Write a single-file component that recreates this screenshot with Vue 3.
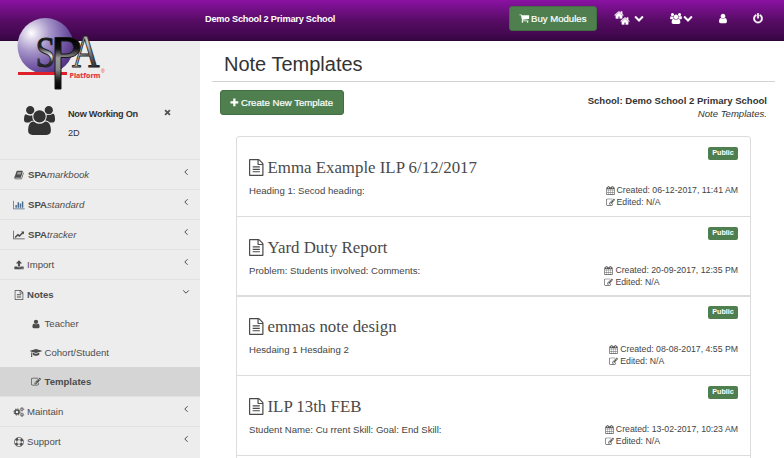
<script setup>
import { h } from 'vue'

const icons = {
  book: ['0 0 1792 1792', 'M1703 478q40 57 18 129l-275 906q-19 64-76.500 107.500t-122.500 43.500h-923q-77 0-148.500-53.500t-99.500-131.500q-24-67-2-127 0-4 3-27t4-37q1-8-3-21.500t-3-19.500q2-11 8-21t16.500-23.500 16.500-23.500q23-38 45-91.500t30-91.500q3-10 .5-30t-.5-28q3-11 17-28t17-23q21-36 42-92t25-90q1-9-2.500-32t.5-28q4-13 22-30.500t22-22.500q19-26 42.500-84.500t27.500-96.500q1-8-3-25.500t-2-26.500q2-8 9-18t18-23 17-21q8-12 16.500-30.500t15-35 16-36 19.500-32 26.500-23.500 36-11.500 47.500 5.500l-1 3q38-9 51-9h761q74 0 114 56t18 130l-274 906q-36 119-71.500 153.500t-128.500 34.500h-869q-27 0-38 15-11 16-1 43 24 70 144 70h923q29 0 56-15.500t35-41.500l300-987q7-22 5-57 38 15 59 43zm-1064 2q-4 13 2 22.500t20 9.500h608q13 0 25.500-9.500t16.500-22.500l21-64q4-13-2-22.500t-20-9.500h-608q-13 0-25.500 9.500t-16.500 22.500zm-83 256q-4 13 2 22.500t20 9.500h608q13 0 25.500-9.500t16.500-22.500l21-64q4-13-2-22.500t-20-9.500h-608q-13 0-25.500 9.500t-16.500 22.500z'],
  user: ['128 0 1536 1792', 'M1536 1399q0 109-62.500 187t-150.500 78h-854q-88 0-150.500-78t-62.500-187q0-85 8.500-160.500t31.500-152 58.500-131 94-89 134.500-34.500q131 128 313 128t313-128q76 0 134.500 34.500t94 89 58.500 131 31.500 152 8.500 160.500zm-256-887q0 159-112.500 271.500t-271.500 112.500-271.500-112.500-112.500-271.500 112.500-271.500 271.500-112.500 271.500 112.500 112.500 271.500z'],
  group: ['-64 0 1920 1792', 'M529 896q-162 5-265 128h-134q-82 0-138-40.500t-56-118.500q0-353 124-353 6 0 43.500 21t97.500 42.500 119 21.500q67 0 133-23-5 37-5 66 0 159 81 290zm1071 637q0 120-73 189.500t-194 69.500h-874q-121 0-194-69.500t-73-189.500q0-53 3.500-103.500t14-109 26.500-108.500 43-97.500 62-81 85.500-53.500 111.500-20q10 0 43 21.500t73 48 107 48 135 21.500 135-21.500 107-48 73-48 43-21.500q61 0 111.500 20t85.500 53.500 62 81 43 97.500 26.500 108.500 14 109 3.500 103.500zm-1024-1277q0 106-75 181t-181 75-181-75-75-181 75-181 181-75 181 75 75 181zm704 384q0 159-112.500 271.500t-271.500 112.500-271.500-112.500-112.500-271.500 112.500-271.500 271.500-112.500 271.500 112.500 112.500 271.500zm576 225q0 78-56 118.500t-138 40.500h-134q-103-123-265-128 81-131 81-290 0-29-5-66 66 23 133 23 59 0 119-21.500t97.500-42.500 43.500-21q124 0 124 353zm-128-609q0 106-75 181t-181 75-181-75-75-181 75-181 181-75 181 75 75 181z'],
  bar: ['0 0 2048 1792', 'M640 896v512h-256v-512h256zm384-512v1024h-256v-1024h256zm1024 1152v128h-2048v-1536h128v1408h1920zm-640-896v768h-256v-768h256zm384-384v1152h-256v-1152h256z'],
  line: ['0 0 2048 1792', 'M2048 1536v128h-2048v-1536h128v1408h1920zm-128-1248v435q0 21-19.500 29.500t-35.500-7.500l-121-121-633 633q-10 10-23 10t-23-10l-233-233-416 416-192-192 585-585q10-10 23-10t23 10l233 233 464-464-121-121q-16-16-7.500-35.500t29.500-19.500h435q14 0 23 9t9 23z'],
  upload: ['0 0 1792 1792', 'M1344 1472q0-26-19-45t-45-19-45 19-19 45 19 45 45 19 45-19 19-45zm256 0q0-26-19-45t-45-19-45 19-19 45 19 45 45 19 45-19 19-45zm128-224v320q0 40-28 68t-68 28h-1472q-40 0-68-28t-28-68v-320q0-40 28-68t68-28h427q21 56 70.500 92t110.500 36h256q61 0 110.500-36t70.500-92h427q40 0 68 28t28 68zm-325-648q-17 40-59 40h-256v448q0 26-19 45t-45 19h-256q-26 0-45-19t-19-45v-448h-256q-42 0-59-40-17-39 14-69l448-448q18-19 45-19t45 19l448 448q31 30 14 69z'],
  file: ['128 0 1536 1792', 'M1596 380q28 28 48 76t20 88v1152q0 40-28 68t-68 28h-1344q-40 0-68-28t-28-68v-1600q0-40 28-68t68-28h896q40 0 88 20t76 48zm-444-244v376h376q-10-29-22-41l-313-313q-12-12-41-22zm384 1528v-1024h-416q-40 0-68-28t-28-68v-416h-768v1536h1280zm-1024-864q0-14 9-23t23-9h704q14 0 23 9t9 23v64q0 14-9 23t-23 9h-704q-14 0-23-9t-9-23v-64zm736 224q14 0 23 9t9 23v64q0 14-9 23t-23 9h-704q-14 0-23-9t-9-23v-64q0-14 9-23t23-9h704zm0 256q14 0 23 9t9 23v64q0 14-9 23t-23 9h-704q-14 0-23-9t-9-23v-64q0-14 9-23t23-9h704z'],
  cap: ['0 0 2304 1792', 'M1774 836l18 316q4 69-82 128t-235 93.500-323 34.500-323-34.500-235-93.500-82-128l18-316 574 181q22 7 48 7t48-7zm530-324q0 23-22 31l-1120 352q-4 1-10 1t-10-1l-652-206q-43 34-71 111.500t-34 178.500q63 36 63 109 0 69-58 107l58 433q2 14-8 25-9 11-24 11h-192q-15 0-24-11-10-11-8-25l58-433q-58-38-58-107 0-73 65-111 11-207 98-330l-333-104q-22-8-22-31t22-31l1120-352q4-1 10-1t10 1l1120 352q22 8 22 31z'],
  edit: ['0 0 1792 1792', 'M888 1184l116-116-152-152-116 116v56h96v96h56zm440-720q-16-16-33 1l-350 350q-17 17-1 33t33-1l350-350q17-17 1-33zm80 594v190q0 119-84.500 203.500t-203.500 84.500h-832q-119 0-203.500-84.500t-84.500-203.500v-832q0-119 84.500-203.500t203.500-84.500h832q63 0 117 25 15 7 18 23 3 17-9 29l-49 49q-14 14-32 8-23-6-45-6h-832q-66 0-113 47t-47 113v832q0 66 47 113t113 47h832q66 0 113-47t47-113v-126q0-13 9-22l64-64q15-15 35-7t20 29zm-96-738l288 288-672 672h-288v-288zm444 132l-92 92-288-288 92-92q28-28 68-28t68 28l152 152q28 28 28 68t-28 68z'],
  cart: ['0 0 1792 1792', 'M704 1536q0 52-38 90t-90 38-90-38-38-90 38-90 90-38 90 38 38 90zm896 0q0 52-38 90t-90 38-90-38-38-90 38-90 90-38 90 38 38 90zm128-1088v512q0 24-16.500 42.500t-40.500 21.500l-1044 122q13 60 13 70 0 16-24 64h920q26 0 45 19t19 45-19 45-45 19h-1024q-26 0-45-19t-19-45q0-11 8-31.500t16-36 21.500-40 15.500-29.500l-177-823h-204q-26 0-45-19t-19-45 19-45 45-19h256q16 0 28.500 6.500t19.500 15.500 13 24.500 8 26 5.500 29.500 4.500 26h1201q26 0 45 19t19 45z'],
  home: ['0 0 1792 1792', 'M1472 992v480q0 26-19 45t-45 19h-384v-384h-256v384h-384q-26 0-45-19t-19-45v-480q0-1 .5-3t.5-3l575-474 575 474q1 2 1 6zm223-69l-62 74q-8 9-21 11h-3q-13 0-21-7l-692-577-692 577q-12 8-24 7-13-2-21-11l-62-74q-8-10-7-23.500t11-21.500l719-599q32-26 76-26t76 26l244 204v-195q0-14 9-23t23-9h192q14 0 23 9t9 23v408l219 182q10 8 11 21.500t-7 23.500z'],
  down: ['0 0 1792 1792', 'M1683 808l-742 741q-19 19-45 19t-45-19l-742-741q-19-19-19-45.500t19-45.500l166-165q19-19 45-19t45 19l531 531 531-531q19-19 45-19t45 19l166 165q19 19 19 45.500t-19 45.500z'],
  power: ['128 0 1536 1792', 'M1664 896q0 156-61 298t-164 245-245 164-298 61-298-61-245-164-164-245-61-298q0-182 80.500-343t226.500-270q43-32 95.500-25t83.500 50q32 42 24.500 94.500t-49.500 84.500q-98 74-151.500 181t-53.500 228q0 104 40.500 198.500t109.500 163.500 163.500 109.500 198.500 40.500 198.500-40.500 163.500-109.500 109.500-163.500 40.500-198.500q0-121-53.500-228t-151.500-181q-42-32-49.500-84.500t24.500-94.500q31-43 84-50t95 25q146 109 226.500 270t80.500 343zm-640-768v640q0 52-38 90t-90 38-90-38-38-90v-640q0-52 38-90t90-38 90 38 38 90z'],
  calendar: ['0 0 1792 1792', 'M192 1664h288v-288h-288v288zm352 0h320v-288h-320v288zm-352-352h288v-320h-288v320zm352 0h320v-320h-320v320zm-352-384h288v-288h-288v288zm736 736h320v-288h-320v288zm-384-736h320v-288h-320v288zm768 736h288v-288h-288v288zm-384-352h320v-320h-320v320zm-352-864v-288q0-13-9.500-22.500t-22.500-9.500h-64q-13 0-22.500 9.500t-9.500 22.500v288q0 13 9.500 22.500t22.500 9.500h64q13 0 22.500-9.500t9.500-22.500zm736 864h288v-320h-288v320zm-384-384h320v-288h-320v288zm384 0h288v-288h-288v288zm32-480v-288q0-13-9.500-22.500t-22.500-9.500h-64q-13 0-22.500 9.500t-9.500 22.500v288q0 13 9.500 22.500t22.500 9.500h64q13 0 22.500-9.500t9.500-22.500zm384-64v1280q0 52-38 90t-90 38h-1408q-52 0-90-38t-38-90v-1280q0-52 38-90t90-38h128v-96q0-66 47-113t113-47h64q66 0 113 47t47 113v96h384v-96q0-66 47-113t113-47h64q66 0 113 47t47 113v96h128q52 0 90 38t38 90z'],
  plus: ['0 0 10 10', 'M3.6.6h2.5v3.1h3.1v2.5h-3.1v3.100h-2.500v-3.100h-3.100v-2.500h3.100z'],
  times: ['0 0 10 10', 'M2.500.6 5 3.100 7.500.6 9.400 2.500 6.900 5 9.400 7.500 7.500 9.400 5 6.900 2.500 9.400.6 7.500 3.100 5 .6 2.500z']
}

function ring(cx, cy, r, w, dash) {
  const base = { cx, cy, r, fill: 'none', stroke: 'currentColor', 'stroke-width': w }
  return h('circle', dash ? { ...base, 'stroke-dasharray': dash } : base)
}

const Icon = (props) => {
  if (props.name === 'cogs') {
    return h('svg', { viewBox: '0 0 22 20' }, [
      ring(7, 10, 4, 3), ring(7, 10, 6.200, 2, '2.600 2.270'),
      ring(17, 4.500, 2.300, 1.700), ring(17, 4.500, 3.600, 1.300, '1.500 1.330'),
      ring(17, 15.500, 2.300, 1.700), ring(17, 15.500, 3.600, 1.300, '1.500 1.330')
    ])
  }
  if (props.name === 'ring') {
    return h('svg', { viewBox: '0 0 20 20' }, [
      ring(10, 10, 9.200, 1.300), ring(10, 10, 4.600, 1.200),
      h('g', { transform: 'rotate(22.5 10 10)' }, [ring(10, 10, 6.800, 4.500, '5.340 5.340')])
    ])
  }
  const [viewBox, d] = icons[props.name]
  return h('svg', { viewBox }, [h('path', { d, fill: 'currentColor' })])
}
Icon.props = ['name']

const menu = [
  { icon: 'book', strong: 'SPA', em: 'markbook' },
  { icon: 'bar', strong: 'SPA', em: 'standard', wide: true },
  { icon: 'line', strong: 'SPA', em: 'tracker', wide: true },
  { icon: 'upload', text: 'Import' },
  {
    icon: 'file', strong: 'Notes', open: true,
    children: [
      { icon: 'user', text: 'Teacher' },
      { icon: 'cap', text: 'Cohort/Student' },
      { icon: 'edit', text: 'Templates', active: true }
    ]
  },
  { icon: 'cogs', text: 'Maintain', wide: true },
  { icon: 'ring', text: 'Support' }
]

const templates = [
  { title: 'Emma Example ILP 6/12/2017', body: 'Heading 1: Secod heading:', created: '06-12-2017, 11:41 AM' },
  { title: 'Yard Duty Report', body: 'Problem: Students involved: Comments:', created: '20-09-2017, 12:35 PM', short: true },
  { title: 'emmas note design', body: 'Hesdaing 1 Hesdaing 2', created: '08-08-2017, 4:55 PM', thick: true },
  { title: 'ILP 13th FEB', body: 'Student Name: Cu rrent Skill: Goal: End Skill:', created: '13-02-2017, 10:23 AM' }
]
</script>

<template>
  <div class="app">
    <header class="topbar">
      <span class="school">Demo School 2 Primary School</span>
      <div class="actions">
        <button class="btn buy"><Icon name="cart" class="i-cart" /><span>Buy Modules</span></button>
        <span class="homes"><Icon name="home" class="h1" /><Icon name="home" class="h2" /></span>
        <Icon name="down" class="i-down d1" />
        <Icon name="group" class="i-group" />
        <Icon name="down" class="i-down d2" />
        <Icon name="user" class="i-user" />
        <Icon name="power" class="i-power" />
      </div>
    </header>

    <div class="columns">
      <aside class="sidebar">
        <svg class="logo" viewBox="0 0 96 78">
          <defs>
            <radialGradient id="ball" cx=".25" cy=".27" r=".8">
              <stop offset="0" stop-color="#fff" /><stop offset=".12" stop-color="#e4deee" />
              <stop offset=".42" stop-color="#a594c8" /><stop offset=".75" stop-color="#7459a6" /><stop offset="1" stop-color="#543785" />
            </radialGradient>
            <linearGradient id="sfill" x1="0" x2="0" y1="0" y2="1">
              <stop offset="0" stop-color="#000" /><stop offset=".4" stop-color="#222" /><stop offset=".58" stop-color="#eee" /><stop offset=".7" stop-color="#333" /><stop offset="1" stop-color="#000" />
            </linearGradient>
            <linearGradient id="pfill" x1="0" x2="0" y1="0" y2="1">
              <stop offset="0" stop-color="#000" /><stop offset=".22" stop-color="#111" /><stop offset=".4" stop-color="#999" /><stop offset=".62" stop-color="#888" /><stop offset=".85" stop-color="#111" /><stop offset="1" stop-color="#000" />
            </linearGradient>
            <linearGradient id="afill" x1="0" x2="1" y1="0" y2="1">
              <stop offset="0" stop-color="#333" /><stop offset=".45" stop-color="#ccc" /><stop offset=".68" stop-color="#555" /><stop offset="1" stop-color="#000" />
            </linearGradient>
          </defs>
          <circle cx="31.500" cy="32" r="28" fill="url(#ball)" />
          <text x="21.500" y="53" class="letter s" fill="url(#sfill)" textLength="20" lengthAdjust="spacingAndGlyphs">S</text>
          <text x="58" y="53" class="letter a" fill="url(#afill)" textLength="27.500" lengthAdjust="spacingAndGlyphs">A</text>
          <path d="M4 59.500H53" stroke="#e01f2d" stroke-width="3" />
          <path d="M41 23.500H53C62 23.500 66 27.500 66 33C66 39.500 61 43.500 52 43.500H47V75H41ZM47 27V40H51C56.500 40 59.500 38 59.500 33.500C59.500 29 56.500 27 52 27Z" fill="url(#pfill)" stroke="#181818" stroke-width="1" fill-rule="evenodd" />
          <text x="55.500" y="63.500" class="platform" textLength="31" lengthAdjust="spacingAndGlyphs">Platform</text>
          <text x="87" y="58.500" class="reg">®</text>
        </svg>
        <div class="working">
          <Icon name="group" class="people" />
          <div class="who"><b>Now Working On</b><span>2D</span></div>
          <Icon name="times" class="close" />
        </div>
        <nav>
          <template v-for="m in menu" :key="m.icon">
            <div class="row">
              <span class="ico" :class="{ wide: m.wide }"><Icon :name="m.icon" :class="m.icon" /></span>
              <span class="label" :class="{ near: !m.em }"><b v-if="m.strong">{{ m.strong }}</b><i v-if="m.em">{{ m.em }}</i>{{ m.text }}</span>
              <svg class="angle" viewBox="0 0 8 8"><path :d="m.open ? 'M1.200 2.400 4 5.200 6.800 2.400' : 'M5.600 1.200 2.800 4 5.600 6.800'" fill="none" stroke="currentColor" stroke-width="1" /></svg>
            </div>
            <div v-for="c in m.children" :key="c.text" class="sub" :class="{ active: c.active }">
              <span class="subico"><Icon :name="c.icon" :class="c.icon" /></span><span>{{ c.text }}</span>
            </div>
          </template>
        </nav>
      </aside>

      <main class="main">
        <h1>Note Templates</h1>
        <div class="tools">
          <button class="btn create"><Icon name="plus" class="i-plus" /><span>Create New Template</span></button>
          <div class="crumb"><b>School: Demo School 2 Primary School</b><i>Note Templates.</i></div>
        </div>
        <section class="panel">
          <article v-for="t in templates" :key="t.title" :class="{ short: t.short, thick: t.thick }">
            <div class="info">
              <h2><Icon name="file" /><span>{{ t.title }}</span></h2>
              <p>{{ t.body }}</p>
            </div>
            <div class="side">
              <span class="badge">Public</span>
              <div class="meta">
                <div><Icon name="calendar" />Created: {{ t.created }}</div>
                <div><Icon name="edit" />Edited: N/A</div>
              </div>
            </div>
          </article>
          <article class="next"></article>
        </section>
      </main>
    </div>
  </div>
</template>

<style>
body { margin: 0; overflow: hidden; }
</style>

<style scoped>
* { box-sizing: border-box; }
svg { display: block; flex: none; }
.app { width: 784px; height: 458px; overflow: hidden; background: #fff; font-family: "Liberation Sans", Arial, sans-serif; font-size: 9.600px; color: #333; }
.topbar { height: 41px; background: linear-gradient(#8b12a3, #570c65 50%, #3c0648 95%, #2a0333); display: flex; color: #fff; padding-left: 205px; }
.school { font-weight: bold; font-size: 9.200px; letter-spacing: -.22px; line-height: 39px; white-space: nowrap; width: 304px; }
.actions { display: flex; align-items: flex-start; }
.btn { font-family: inherit; background: #4f7f4f; border: 1px solid #426f42; border-radius: 3px; color: #fff; display: flex; align-items: center; padding: 0; height: 25px; font-size: 9.600px; white-space: nowrap; -webkit-text-stroke: .2px #fff; }
.buy { width: 88px; margin-top: 6px; padding-left: 9px; gap: 1.500px; }
.i-cart { width: 10.500px; height: 10.500px; }
.homes { margin: 10px 0 0 17px; width: 16px; display: flex; }
.h1 { width: 10px; height: 10px; }
.h2 { width: 10px; height: 10px; margin: 6px 0 0 -4px; }
.homes svg { stroke: #fff; stroke-width: 60px; }
.i-down { width: 10px; height: 10px; margin-top: 13px; }
.d1 { margin-left: 4px; }
.i-group { width: 12px; height: 11px; margin: 13px 0 0 26px; }
.d2 { margin-left: 1px; }
.i-user { width: 10px; height: 11px; margin: 13px 0 0 25px; }
.i-power { width: 10px; height: 11px; margin: 13px 0 0 25px; stroke: #fff; stroke-width: 60px; }
.columns { display: flex; height: 417px; }
.sidebar { position: relative; width: 200px; background: #ededed; padding-top: 64px; }
.logo { position: absolute; left: 14px; top: -27px; width: 96px; height: 78px; }
.letter { font-family: "Liberation Serif", serif; stroke: #222; stroke-width: 1px; }
.s { font-size: 45px; }
.a { font-size: 46px; }
.platform { font: bold 7.500px "Open Sans", sans-serif; fill: #e8303c; stroke: #e8303c; stroke-width: .15px; }
.reg { font-size: 5px; fill: #e8303c; }
.working { display: flex; height: 54px; padding-left: 24px; color: #333; }
.people { width: 31px; height: 29px; margin-top: 1px; }
.who { width: 96px; margin-left: 13px; display: flex; flex-direction: column; line-height: 19px; font-size: 9.200px; }
.who b { white-space: nowrap; letter-spacing: -.28px; }
.close { width: 7px; height: 7px; margin-top: 4px; color: #555; }
nav { color: #4c4c4c; font-size: 9.600px; }
.row { height: 30px; border-top: 1px solid #e2e2e2; display: flex; padding-left: 13px; align-items: center; }
.ico { width: 11px; display: flex; justify-content: center; }
.ico svg { width: 10px; height: 10px; }
.ico.wide svg { width: 12px; height: 10px; }
.ico svg.bar { color: #46698c; }
.label { margin-left: 4px; width: 154px; }
.label.near { margin-left: 3px; width: 155px; }
.angle { width: 8px; height: 8px; margin-top: -5px; }
.sub { height: 29px; display: flex; align-items: center; padding-left: 29px; }
.subico { width: 13px; margin-right: 2.500px; display: flex; justify-content: center; }
.subico svg { width: 10px; height: 10px; }
.subico svg.cap { width: 12px; }
.active { background: #d5d5d5; font-weight: bold; }
.main { flex: 1; padding: 0 9px 0 12px; display: flex; flex-direction: column; }
h1 { margin: 0; padding-left: 12px; height: 41px; flex: none; border-bottom: 1px solid #d3d3d3; font-size: 20px; font-weight: normal; line-height: 46px; }
.tools { display: flex; justify-content: space-between; align-items: flex-start; padding: 8px 8px 0; height: 54px; flex: none; }
.create { width: 124px; padding-left: 9px; gap: 2px; }
.i-plus { width: 9px; height: 9px; }
.crumb { text-align: right; display: flex; flex-direction: column; line-height: 13px; padding-top: 4px; font-size: 9.550px; }
.panel { margin: 0 24px; flex: none; border: solid #dcdcdc; border-width: 0 1px; border-radius: 4px 4px 0 0; }
article { height: 80px; border-top: 1px solid #dcdcdc; display: flex; justify-content: space-between; padding: 10px 12px 0; }
article:first-child { border-radius: 3px 3px 0 0; }
article.short { height: 79px; }
article.thick { border-top-width: 2px; padding-top: 9px; }
h2 { margin: 10px 0 0; font: 16.850px "Liberation Serif", serif; line-height: 22px; color: #4a4a4a; display: flex; align-items: center; gap: 4px; }
h2 svg { width: 14.500px; height: 17px; margin-top: -2px; }
p { margin: 5px 0 0; line-height: 13px; color: #444; font-size: 9.600px; white-space: pre; }
.side { display: flex; flex-direction: column; align-items: flex-end; }
.badge { width: 30px; height: 13px; background: #4f7f4f; border-radius: 2px; color: #fff; font-size: 7.200px; font-weight: bold; line-height: 12px; text-align: center; }
.meta { margin-top: 24px; line-height: 12px; font-size: 8.720px; color: #444; }
.meta div { display: flex; align-items: center; gap: 2px; white-space: nowrap; }
.meta svg { width: 9px; height: 9px; color: #555; }
</style>
